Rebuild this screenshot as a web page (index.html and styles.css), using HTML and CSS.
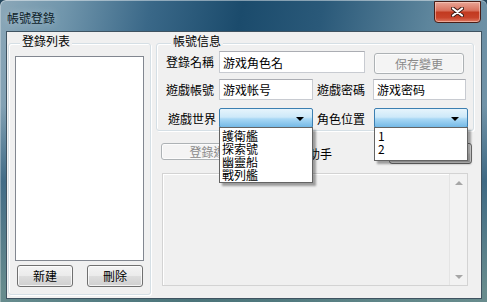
FILE: index.html
```html
<!DOCTYPE html>
<html>

<head>
    <title>帳號登錄</title>
    <link rel="stylesheet" href="styles.css">
</head>

<body>
    <div class="window">
        <div class="titlebar">
            <span class="title">帳號登錄</span>
            <div class="close">
                <svg width="13" height="10" viewBox="0 0 13 10">
                    <path d="M2 1.5 L11 8.5 M11 1.5 L2 8.5" stroke="#3b1a14" stroke-width="4" stroke-linecap="round" />
                    <path d="M2 1.5 L11 8.5 M11 1.5 L2 8.5" stroke="#ffffff" stroke-width="2.2" stroke-linecap="round" />
                </svg>
            </div>
        </div>

        <div class="client">
            <!-- login list -->
            <div class="group list-group">
                <div class="group-title">登錄列表</div>
                <div class="listbox"></div>
                <div class="list-buttons">
                    <button class="btn btn-small">新建</button>
                    <button class="btn btn-small">刪除</button>
                </div>
            </div>

            <div class="main">
                <!-- account info -->
                <div class="group info-group">
                    <div class="group-title">帳號信息</div>

                    <div class="row row-first">
                        <span class="label">登錄名稱</span>
                        <div class="textbox tb-wide">游戏角色名</div>
                        <button class="btn btn-save" disabled>保存變更</button>
                    </div>

                    <div class="row row-second">
                        <span class="label">遊戲帳號</span>
                        <div class="textbox tb-half">游戏帐号</div>
                        <span class="label label-right">遊戲密碼</span>
                        <div class="textbox tb-half">游戏密码</div>
                    </div>

                    <div class="row row-third">
                        <span class="label label-indent">遊戲世界</span>
                        <div class="combo">
                            <div class="combo-box"><span class="combo-arrow"></span></div>
                            <div class="dropdown dropdown-world">
                                <div class="option">護衛艦</div>
                                <div class="option">探索號</div>
                                <div class="option">幽靈船</div>
                                <div class="option">戰列艦</div>
                            </div>
                        </div>
                        <span class="label label-right label-pos">角色位置</span>
                        <div class="combo">
                            <div class="combo-box"><span class="combo-arrow"></span></div>
                            <div class="dropdown dropdown-pos">
                                <div class="option">1</div>
                                <div class="option">2</div>
                            </div>
                        </div>
                    </div>
                </div>

                <div class="actions">
                    <button class="btn btn-login" disabled>登錄遊戲</button>
                    <span class="helper">遊戲助手</span>
                    <button class="btn btn-dir">打開遊戲目錄</button>
                </div>

                <div class="log">
                    <div class="log-text"></div>
                    <div class="scrollbar">
                        <span class="scroll-btn"><span class="arrow-up"></span></span>
                        <span class="scroll-btn"><span class="arrow-down"></span></span>
                    </div>
                </div>
            </div>
        </div>
    </div>
</body>

</html>
```

FILE: styles.css
```css
body {
    margin: 0;
    width: 487px;
    height: 302px;
    overflow: hidden;
    background-color: #24465c;
    font-family: "Noto Sans CJK TC", "Noto Sans", sans-serif;
    font-size: 12px;
    color: #000;
}

.window {
    width: 487px;
    height: 302px;
    border-radius: 6px 6px 0 0;
    background:
        linear-gradient(to bottom, rgba(0, 0, 0, 0) 35%, rgba(18, 68, 100, 0.55) 60%, rgba(96, 134, 128, 0.7) 96%),
        linear-gradient(100deg, #8ba7b8 0%, #7196ac 12%, #3a6888 28%, #1b4b6c 45%, #2a5979 60%, #5d859c 80%, #7b9aad 100%);
    box-shadow: inset 0 1px 0 rgba(255, 255, 255, 0.45), inset 1px 0 0 rgba(255, 255, 255, 0.3);
    display: flex;
    flex-direction: column;
}

.titlebar {
    height: 31px;
    display: flex;
    align-items: flex-start;
}

.title {
    margin: 10px 0 0 7px;
    line-height: 16px;
    color: #0c1c28;
    text-shadow: 0 0 7px rgba(220, 235, 245, 0.55);
}

.close {
    margin: 1px 6px 0 auto;
    width: 45px;
    height: 20px;
    border: 1px solid #4a1e17;
    border-radius: 0 0 4px 4px;
    background: linear-gradient(#e9a596 0%, #d9735f 42%, #c23a20 52%, #c8432a 78%, #de7a63 100%);
    box-shadow: inset 0 0 0 1px rgba(255, 220, 210, 0.5);
    display: flex;
    align-items: center;
    justify-content: center;
}

.client {
    margin: 0 5px 3px 6px;
    height: 266px;
    border: 1px solid #3f5361;
    background-color: #f0f0f0;
    display: flex;
    align-items: flex-start;
}

/* group boxes */
.group {
    border: 1px solid #d5dfe5;
    border-radius: 3px;
    box-shadow: inset 1px 1px 0 #fff, 1px 1px 0 #fff;
}

.group-title {
    width: fit-content;
    margin: -10px 0 0 5px;
    padding: 0 2px;
    line-height: 14px;
    background-color: #f0f0f0;
}

.list-group {
    margin: 11px 0 0 1px;
    width: 143px;
    height: 252px;
    box-sizing: border-box;
    padding: 0 6px 8px 6px;
}

.listbox {
    margin-top: 8px;
    height: 205px;
    box-sizing: border-box;
    border: 1px solid #828790;
    background-color: #fff;
}

.list-buttons {
    margin-top: 4px;
    display: flex;
    justify-content: space-between;
    padding: 0 1px 0 2px;
}

/* buttons */
.btn {
    font: inherit;
    padding: 0;
    line-height: 16px;
    color: #000;
    border: 1px solid #707070;
    border-radius: 3px;
    background: linear-gradient(#f3f3f3 0%, #ebebeb 48%, #dddddd 52%, #cfcfcf 100%);
    box-shadow: inset 0 0 0 1px rgba(255, 255, 255, 0.75);
}

.btn:disabled {
    color: #8a8a8a;
    border-color: #adb2b5;
    background: #f4f4f4;
}

.btn-small {
    width: 56px;
    height: 22px;
}

.main {
    margin: 11px 0 0 5px;
    width: 318px;
    display: flex;
    flex-direction: column;
}

.info-group {
    height: 88px;
    box-sizing: border-box;
    padding: 0 0 3px 9px;
}

.row {
    display: flex;
    align-items: center;
}

.row-first {
    margin-top: 3px;
    height: 22px;
    align-items: flex-start;
}

.row-first .label {
    line-height: 22px;
}

.row-second {
    margin-top: 6px;
    height: 21px;
}

.row-third {
    margin-top: 8px;
    height: 20px;
}

.label {
    width: 53px;
    flex-shrink: 0;
    white-space: nowrap;
}

.label-indent {
    padding-left: 2px;
    box-sizing: border-box;
}

.label-right {
    margin-left: 4px;
    width: 56px;
}

.label-pos {
    width: 57px;
}

.textbox {
    height: 100%;
    box-sizing: border-box;
    border: 1px solid #c8cbd1;
    border-top-color: #abadb3;
    background-color: #fff;
    padding: 0 3px;
    display: flex;
    align-items: center;
    white-space: nowrap;
}

.tb-wide {
    width: 146px;
}

.tb-half {
    width: 94px;
}

.row-second .tb-half:last-child {
    width: 93px;
}

.btn-save {
    margin: 2px 0 0 9px;
    width: 90px;
    height: 21px;
}

/* combo boxes */
.combo {
    position: relative;
    width: 94px;
    height: 20px;
}

.combo-box {
    height: 100%;
    box-sizing: border-box;
    border: 1px solid #3c7fb1;
    border-radius: 2px;
    background: linear-gradient(#e6f4fc 0%, #cde9f9 45%, #a9d8f5 55%, #74b9e6 100%);
    display: flex;
    align-items: center;
    justify-content: flex-end;
    padding-right: 8px;
}

.combo-arrow {
    width: 0;
    height: 0;
    border-left: 4px solid transparent;
    border-right: 4px solid transparent;
    border-top: 4px solid #000;
    margin-top: 2px;
}

.dropdown {
    position: absolute;
    top: 19px;
    left: 0;
    width: 94px;
    box-sizing: border-box;
    border: 1px solid #646464;
    background-color: #fff;
    padding: 1px 0 0 2px;
    box-shadow: 3px 3px 2px rgba(0, 0, 0, 0.35);
    z-index: 2;
}

.dropdown-world {
    height: 56px;
}

.dropdown-pos {
    left: 0;
    height: 34px;
    padding-left: 3px;
}

.option {
    height: 13px;
    line-height: 13px;
    white-space: nowrap;
}

/* action row */
.actions {
    margin-top: 12px;
    height: 21px;
    display: flex;
    align-items: flex-start;
}

.btn-login {
    margin-left: 5px;
    width: 105px;
    height: 17px;
    line-height: 14px;
}

.helper {
    margin: 3px 0 0 18px;
    line-height: 16px;
    white-space: nowrap;
}

.btn-dir {
    margin: 0 2px 0 auto;
    width: 83px;
    height: 21px;
}

/* log box */
.log {
    margin: 9px 0 0 6px;
    width: 306px;
    height: 113px;
    box-sizing: border-box;
    border: 1px solid #d3d3d3;
    box-shadow: inset 1px 1px 0 #fff;
    display: flex;
}

.log-text {
    flex: 1;
}

.scrollbar {
    width: 17px;
    border-left: 1px solid #e4e4e4;
    background-color: #f2f2f2;
    display: flex;
    flex-direction: column;
    justify-content: space-between;
}

.scroll-btn {
    height: 17px;
    display: flex;
    align-items: center;
    justify-content: center;
}

.arrow-up,
.arrow-down {
    width: 0;
    height: 0;
    border-left: 4px solid transparent;
    border-right: 4px solid transparent;
}

.arrow-up {
    border-bottom: 4px solid #a6a6a6;
}

.arrow-down {
    border-top: 4px solid #a6a6a6;
}
```
